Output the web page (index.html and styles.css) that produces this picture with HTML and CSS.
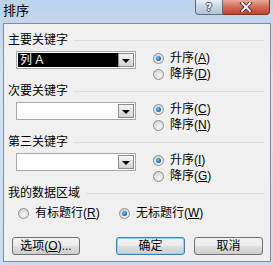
FILE: index.html
```html
<html>
<head>
	<title>排序</title>
	<meta http-equiv="Content-Type" content="text/html; charset=utf-8" />
	<link rel="stylesheet" href="styles.css">
</head>
<body>
	<div class="window">
		<div class="titlebar">
			<span class="title">排序</span>
			<div class="caption">
				<span class="cap help">?</span>
				<span class="cap close">
					<svg width="14" height="10" viewBox="0 0 14 10">
						<path d="M3 1 L11 9 M11 1 L3 9" stroke="#4b2a24" stroke-width="3.6" stroke-linecap="square"/>
						<path d="M3 1 L11 9 M11 1 L3 9" stroke="#ffffff" stroke-width="1.8" stroke-linecap="square"/>
					</svg>
				</span>
			</div>
		</div>
		<div class="client">
			<div class="group">
				<div class="group-head"><span>主要关键字</span><i class="rule"></i></div>
				<div class="group-body">
					<div class="combo selected"><span class="combo-text">列 A</span><span class="combo-btn"><i class="arrow"></i></span></div>
					<div class="radios">
						<label class="radio checked"><span class="dot"></span><span>升序(<u>A</u>)</span></label>
						<label class="radio"><span class="dot"></span><span>降序(<u>D</u>)</span></label>
					</div>
				</div>
			</div>
			<div class="group">
				<div class="group-head"><span>次要关键字</span><i class="rule"></i></div>
				<div class="group-body">
					<div class="combo"><span class="combo-text"></span><span class="combo-btn"><i class="arrow"></i></span></div>
					<div class="radios">
						<label class="radio checked"><span class="dot"></span><span>升序(<u>C</u>)</span></label>
						<label class="radio"><span class="dot"></span><span>降序(<u>N</u>)</span></label>
					</div>
				</div>
			</div>
			<div class="group">
				<div class="group-head"><span>第三关键字</span><i class="rule"></i></div>
				<div class="group-body">
					<div class="combo"><span class="combo-text"></span><span class="combo-btn"><i class="arrow"></i></span></div>
					<div class="radios">
						<label class="radio checked"><span class="dot"></span><span>升序(<u>I</u>)</span></label>
						<label class="radio"><span class="dot"></span><span>降序(<u>G</u>)</span></label>
					</div>
				</div>
			</div>
			<div class="group">
				<div class="group-head"><span>我的数据区域</span><i class="rule"></i></div>
				<div class="radio-row">
					<label class="radio first"><span class="dot"></span><span>有标题行(<u>R</u>)</span></label>
					<label class="radio checked"><span class="dot"></span><span>无标题行(<u>W</u>)</span></label>
				</div>
			</div>
			<div class="buttons">
				<button class="btn options">选项(<u>O</u>)...</button>
				<button class="btn ok">确定</button>
				<button class="btn cancel">取消</button>
			</div>
		</div>
	</div>
</body>
</html>
```

FILE: styles.css
```css
*{
	margin: 0;
	padding: 0;
	box-sizing: border-box;
}
body{
	width: 273px;
	height: 265px;
	overflow: hidden;
	font-family: "Liberation Sans", "Noto Sans CJK SC", sans-serif;
	font-size: 12px;
	color: #000;
}
.window{
	display: flex;
	flex-direction: column;
	width: 273px;
	height: 265px;
	padding: 0 2px 3px 3px;
	background: linear-gradient(#bcd3ec, #d3e3f4 30%, #c9dcf1);
}
.titlebar{
	display: flex;
	align-items: flex-start;
	height: 23px;
}
.title{
	margin-top: 2px;
	font-size: 13px;
	line-height: 17px;
}
.caption{
	display: flex;
	margin-left: auto;
	margin-right: 1px;
}
.cap{
	display: flex;
	justify-content: center;
	align-items: center;
	height: 15px;
	border: 1px solid #5f6f80;
	border-top: none;
}
.help{
	width: 28px;
	border-radius: 0 0 0 4px;
	background: linear-gradient(#e6edf5, #c8d5e4 50%, #b3c4d8);
	color: #fff;
	font-weight: bold;
	font-family: "DejaVu Sans", sans-serif;
	font-size: 11px;
	text-shadow: 1px 0 0 #3f4e60, -1px 0 0 #3f4e60, 0 1px 0 #3f4e60, 0 -1px 0 #3f4e60;
}
.close{
	width: 47px;
	border-left: none;
	border-color: #7a3227;
	border-radius: 0 0 4px 0;
	background: linear-gradient(#e9a99a, #d16a55 50%, #c2442d);
}
.client{
	flex: 1;
	display: flex;
	flex-direction: column;
	border: 1px solid #848b94;
	background: #f0f0f0;
	padding: 9px 6px 0 4px;
}
.group-head{
	display: flex;
	align-items: center;
	height: 14px;
	line-height: 14px;
	gap: 6px;
}
.rule{
	flex: 1;
	height: 1px;
	background: #d5dfe5;
}
.group-body{
	display: flex;
	height: 32px;
	margin-top: 3px;
	margin-bottom: 2px;
}
.combo{
	display: flex;
	width: 120px;
	height: 18px;
	margin-left: 8px;
	margin-top: 1px;
	padding: 1px;
	border: 1px solid #a3a8ad;
	background: #fff;
}
.combo-text{
	flex: 1;
	padding-left: 2px;
	line-height: 14px;
	font-size: 12px;
}
.combo.selected .combo-text{
	background: #000;
	color: #fff;
}
.combo-btn{
	display: flex;
	justify-content: center;
	align-items: center;
	width: 16px;
	border: 1px solid #8d8d8d;
	background: linear-gradient(#f5f5f5, #e3e3e3 50%, #d2d2d2);
}
.arrow{
	width: 0;
	height: 0;
	margin-top: 1px;
	border-left: 4px solid transparent;
	border-right: 4px solid transparent;
	border-top: 4px solid #000;
}
.radios{
	display: flex;
	flex-direction: column;
	margin-left: 17px;
}
.radio{
	display: flex;
	align-items: center;
	gap: 6px;
	height: 16px;
	line-height: 16px;
	white-space: nowrap;
}
.dot{
	position: relative;
	width: 11px;
	height: 11px;
	border-radius: 50%;
	border: 1px solid #8b8e91;
	background: radial-gradient(circle at 60% 65%, #f7f7f7, #dcdcdc 60%, #c9c9c9);
}
.radio.checked .dot::after{
	content: "";
	position: absolute;
	left: 2px;
	top: 2px;
	width: 5px;
	height: 5px;
	border-radius: 50%;
	background: radial-gradient(circle at 40% 40%, #74c6f4, #1a6fb4 60%, #0d3f78);
}
.radio-row{
	display: flex;
	height: 16px;
	margin-top: 5px;
}
.radio.first{
	width: 101px;
	margin-left: 10px;
}
.buttons{
	display: flex;
	margin-top: 16px;
	margin-left: 4px;
}
.btn{
	width: 68px;
	height: 18px;
	border: 1px solid #707070;
	border-radius: 3px;
	background: linear-gradient(#f2f2f2, #ebebeb 50%, #dddddd 51%, #cfcfcf);
	font-family: "Liberation Sans", "Noto Sans CJK SC", sans-serif;
	font-size: 12px;
	line-height: 14px;
	color: #000;
}
.btn.ok{
	width: 69px;
	margin-left: 36px;
	border-color: #3c7fb1;
	box-shadow: inset 0 0 0 1px #8fd3f5;
}
.btn.cancel{
	width: 69px;
	margin-left: 9px;
}
```
